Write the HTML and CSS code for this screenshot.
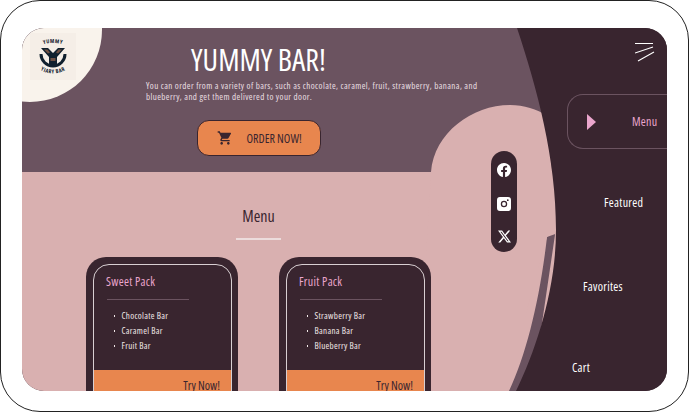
FILE: index.html
```html
<!DOCTYPE html>
<html lang="en">
<head>
<meta charset="utf-8">
<title>Yummy Bar</title>
<link rel="stylesheet" href="styles.css">
</head>
<body>
<div class="frame">
  <div class="app">
    <svg class="shapes" width="645" height="363" viewBox="0 0 645 363" aria-hidden="true">
      <path class="s-strip" d="M534 200 L525 209 C518 270 505 325 487 363 L510 363 Z"/>
      <path class="s-hump" d="M409 144 C412 105 450 77 488 77 C502 77 515 81 525 88 L536 205 L525 209 L500 300 L400 300 Z"/>
      <path class="s-side" d="M495 0 C515 60 534 130 534 202 C534 260 515 320 494 363 L645 363 L645 0 Z"/>
    </svg>

    <main class="main">
      <header class="hero">
        <div class="badge">
          <svg class="logo" width="46" height="47" viewBox="0 0 46 47" role="img" aria-label="Yummy Bar logo">
            <rect width="46" height="47" fill="#f5eee7"/>
            <defs>
              <path id="arc-top" d="M6 14 Q23 6 40 14"/>
              <path id="arc-bot" d="M7 35 Q23 46 39 35"/>
            </defs>
            <text class="logo-text"><textPath href="#arc-top" startOffset="50%" text-anchor="middle">YUMMY</textPath></text>
            <path d="M9.500 21 A13.500 13.500 0 1 0 36.500 21 L33.500 21 A10.500 10.500 0 1 1 12.500 21 Z" fill="#10202e"/>
            <path d="M11 15 L18 15 L23 20 L28 15 L35 15 L27 24 L27 33 L19 33 L19 24 Z" fill="#10202e"/>
            <path d="M14 16.500 L17.500 16.500 L20 19.500 L18 20.500 Z M32 16.500 L28.500 16.500 L26 19.500 L28 20.500 Z M20.500 25 L25.500 25 L25.500 28 L20.500 28 Z" fill="#6f5044"/>
            <text class="logo-text"><textPath href="#arc-bot" startOffset="50%" text-anchor="middle">YIARY BAR</textPath></text>
          </svg>
        </div>
        <h1 class="title">YUMMY BAR!</h1>
        <p class="lead">You can order from a variety of bars, such as chocolate, caramel, fruit, strawberry, banana, and blueberry, and get them delivered to your door.</p>
        <button class="order" type="button">
          <svg width="16" height="16" viewBox="0 0 24 24" aria-hidden="true"><path fill="#39252f" d="M7 18c-1.100 0-2 .9-2 2s.9 2 2 2 2-.9 2-2-.9-2-2-2zM1 2v2h2l3.600 7.590-1.350 2.450c-.16.280-.25.610-.25.960 0 1.100.9 2 2 2h12v-2H7.420c-.14 0-.25-.110-.25-.250l.03-.120.9-1.630h7.450c.75 0 1.410-.410 1.750-1.030l3.580-6.490A1 1 0 0 0 20 4H5.210l-.94-2H1zm16 16c-1.100 0-2 .9-2 2s.9 2 2 2 2-.9 2-2-.9-2-2-2z"/></svg>
          <span>ORDER NOW!</span>
        </button>
      </header>

      <section class="menu">
        <h2 class="menu-title">Menu</h2>
        <div class="rule"></div>
        <div class="cards">
          <article class="card">
            <div class="card-inner">
              <h3 class="card-title">Sweet Pack</h3>
              <div class="card-rule"></div>
              <ul class="card-list">
                <li>Chocolate Bar</li>
                <li>Caramel Bar</li>
                <li>Fruit Bar</li>
              </ul>
              <div class="card-foot">Try Now!</div>
            </div>
          </article>
          <article class="card">
            <div class="card-inner">
              <h3 class="card-title">Fruit Pack</h3>
              <div class="card-rule"></div>
              <ul class="card-list">
                <li>Strawberry Bar</li>
                <li>Banana Bar</li>
                <li>Blueberry Bar</li>
              </ul>
              <div class="card-foot">Try Now!</div>
            </div>
          </article>
        </div>
      </section>
    </main>

    <div class="social">
      <svg width="14" height="14" viewBox="0 0 24 24" aria-label="Facebook" role="img"><path fill="#fff" d="M24 12.070C24 5.400 18.630 0 12 0S0 5.400 0 12.070c0 6.030 4.390 11.020 10.130 11.930v-8.440H7.080v-3.490h3.050V9.410c0-3.020 1.790-4.690 4.530-4.690 1.310 0 2.680.23 2.680.23v2.970h-1.510c-1.490 0-1.960.93-1.960 1.880v2.270h3.330l-.53 3.490h-2.800V24C19.610 23.090 24 18.100 24 12.070z"/></svg>
      <svg width="14" height="14" viewBox="0 0 24 24" aria-label="Instagram" role="img"><path fill="#fff" fill-rule="evenodd" d="M5 0h14a5 5 0 0 1 5 5v14a5 5 0 0 1-5 5H5a5 5 0 0 1-5-5V5a5 5 0 0 1 5-5zm7 6.500a5.500 5.500 0 1 0 0 11 5.500 5.500 0 0 0 0-11zm0 2.200a3.300 3.300 0 1 1 0 6.600 3.300 3.300 0 0 1 0-6.600zM18.500 4a1.500 1.500 0 1 0 0 3 1.500 1.500 0 0 0 0-3z"/></svg>
      <svg width="13" height="13" viewBox="0 0 24 24" aria-label="X" role="img"><path fill="#fff" d="M18.900 1.150h3.680l-8.040 9.190L24 22.850h-7.410l-5.800-7.590-6.640 7.590H.47l8.600-9.830L0 1.150h7.590l5.240 6.930zM17.610 20.640h2.040L6.490 3.240H4.300z"/></svg>
    </div>

    <nav class="side">
      <button class="burger" type="button" aria-label="Open menu">
        <svg class="burger-icon" width="20" height="20" viewBox="0 0 20 20" aria-hidden="true"><path d="M0 1.500 H18 M0 11 L18 5 M3 19 L19 10" stroke="#fff" stroke-width="1.100" fill="none"/></svg>
      </button>
      <a class="item item-menu"><svg width="9" height="16" viewBox="0 0 9 16" aria-hidden="true"><path d="M0 0 L9 8 L0 16 Z" fill="#eba6cd"/></svg><span>Menu</span></a>
      <a class="item item-featured">Featured</a>
      <a class="item item-favorites">Favorites</a>
      <a class="item item-cart">Cart</a>
    </nav>
  </div>
</div>
</body>
</html>
```
FILE: styles.css
```css
* { box-sizing: border-box; }
html, body { margin: 0; padding: 0; }
body {
  width: 689px;
  height: 412px;
  background: #fff;
  font-family: "Open Sans", "Liberation Sans", sans-serif;
  font-stretch: 75%;
  overflow: hidden;
}
.frame {
  width: 689px;
  height: 412px;
  border: 1px solid #222;
  border-radius: 40px;
  padding: 27px 21px 20px 21px;
  background: #fff;
}
.app {
  position: relative;
  width: 645px;
  height: 363px;
  border-radius: 22px;
  overflow: hidden;
  display: flex;
  background: #39252f;
}
.app::before {
  content: "";
  position: absolute;
  left: 0; top: 0;
  width: 540px;
  height: 363px;
  background: linear-gradient(#6b5360 0 144px, #d9b0b0 144px);
}
.shapes { position: absolute; left: 0; top: 0; }
.s-side { fill: #39252f; }
.s-hump { fill: #d9b0b0; }
.s-strip { fill: #6b5360; }
.main {
  width: 473px;
  position: relative;
  display: flex;
  flex-direction: column;
}
.hero {
  position: relative;
  height: 144px;
  flex: none;
  display: flex;
  flex-direction: column;
  align-items: center;
  padding-top: 15px;
}
.badge {
  position: absolute;
  left: -64px;
  top: -70px;
  width: 144px;
  height: 144px;
  border-radius: 50%;
  background: #f9f3ec;
}
.logo { position: absolute; left: 72px; top: 75px; }
.logo-text { font-size: 5.500px; font-weight: 700; fill: #10202e; letter-spacing: .5px; }
.title {
  margin: 0;
  font-size: 30px;
  line-height: 34px;
  font-weight: 400;
  color: #fff;
}
.lead {
  margin: 4px 0 0 124px;
  align-self: flex-start;
  width: 340px;
  font-size: 9px;
  line-height: 10.500px;
  letter-spacing: .4px;
  color: #e9dfe0;
}
.order {
  margin-top: 18px;
  width: 124px;
  height: 36px;
  flex: none;
  display: flex;
  align-items: center;
  gap: 14px;
  padding: 0 0 0 19px;
  background: #e8864e;
  border: 1px solid #39252f;
  border-radius: 12px;
  color: #39252f;
  font: inherit;
  font-size: 12px;
}
.menu {
  position: relative;
  flex: 1;
  display: flex;
  flex-direction: column;
  align-items: center;
  padding-top: 34px;
}
.menu-title {
  margin: 0;
  font-size: 16px;
  line-height: 20px;
  font-weight: 400;
  color: #39252f;
}
.rule {
  margin-top: 12px;
  width: 45px;
  height: 2px;
  background: #ecdcdc;
}
.cards {
  margin-top: 17px;
  display: flex;
  flex: none;
  gap: 41px;
}
.card {
  width: 152px;
  height: 170px;
  padding: 7px 6px 0 7px;
  background: #39252f;
  border-radius: 20px 20px 0 0;
}
.card-inner {
  height: 170px;
  border: 1.500px solid #d8cfd2;
  border-radius: 16px;
  overflow: hidden;
  display: flex;
  flex-direction: column;
}
.card-title {
  margin: 9px 0 0 12px;
  font-size: 12px;
  line-height: 15px;
  font-weight: 400;
  letter-spacing: .3px;
  color: #eba6cd;
}
.card-rule {
  margin: 10px 0 0 13px;
  width: 82px;
  height: 1px;
  background: #6b5360;
}
.card-list {
  margin: 8px 0 0 0;
  padding: 0 0 0 27.500px;
  list-style: none;
  font-size: 9px;
  line-height: 15px;
  letter-spacing: .3px;
  color: #f2e8e8;
}
.card-list li { position: relative; }
.card-list li::before {
  content: "";
  position: absolute;
  left: -8px;
  top: 7px;
  width: 1.500px;
  height: 1.500px;
  background: #f2e8e8;
}
.card-foot {
  margin-top: 17px;
  height: 60px;
  flex: none;
  padding: 8px 11px 0 0;
  background: #e8864e;
  text-align: right;
  color: #39252f;
  font-size: 12px;
  line-height: 15px;
}
.social {
  position: absolute;
  left: 469px;
  top: 123px;
  width: 26px;
  height: 101px;
  border-radius: 13px;
  background: #39252f;
  display: flex;
  flex-direction: column;
  align-items: center;
  justify-content: space-between;
  padding: 12px 0 9px;
}
.side {
  position: relative;
  flex: 1;
  display: flex;
  flex-direction: column;
  color: #fff;
  font-size: 12px;
  letter-spacing: .3px;
}
.burger {
  align-self: flex-end;
  margin: 14px 0 0 0;
  padding: 0;
  width: 32px;
  height: 20px;
  background: none;
  border: 0;
  display: flex;
}
.burger-icon { display: block; }
.item { display: block; line-height: 15px; }
.item-menu {
  margin: 32px 0 0 72px;
  width: 100px;
  height: 55px;
  display: flex;
  align-items: center;
  justify-content: flex-start;
  padding-left: 19px;
  gap: 36px;
  border: 1px solid #6b5360;
  border-right: 0;
  border-radius: 16px 0 0 16px;
  color: #eba6cd;
}
.item-featured { margin: 46px 0 0 109px; }
.item-favorites { margin: 69px 0 0 88px; }
.item-cart { margin: 66px 0 0 77px; }
```
